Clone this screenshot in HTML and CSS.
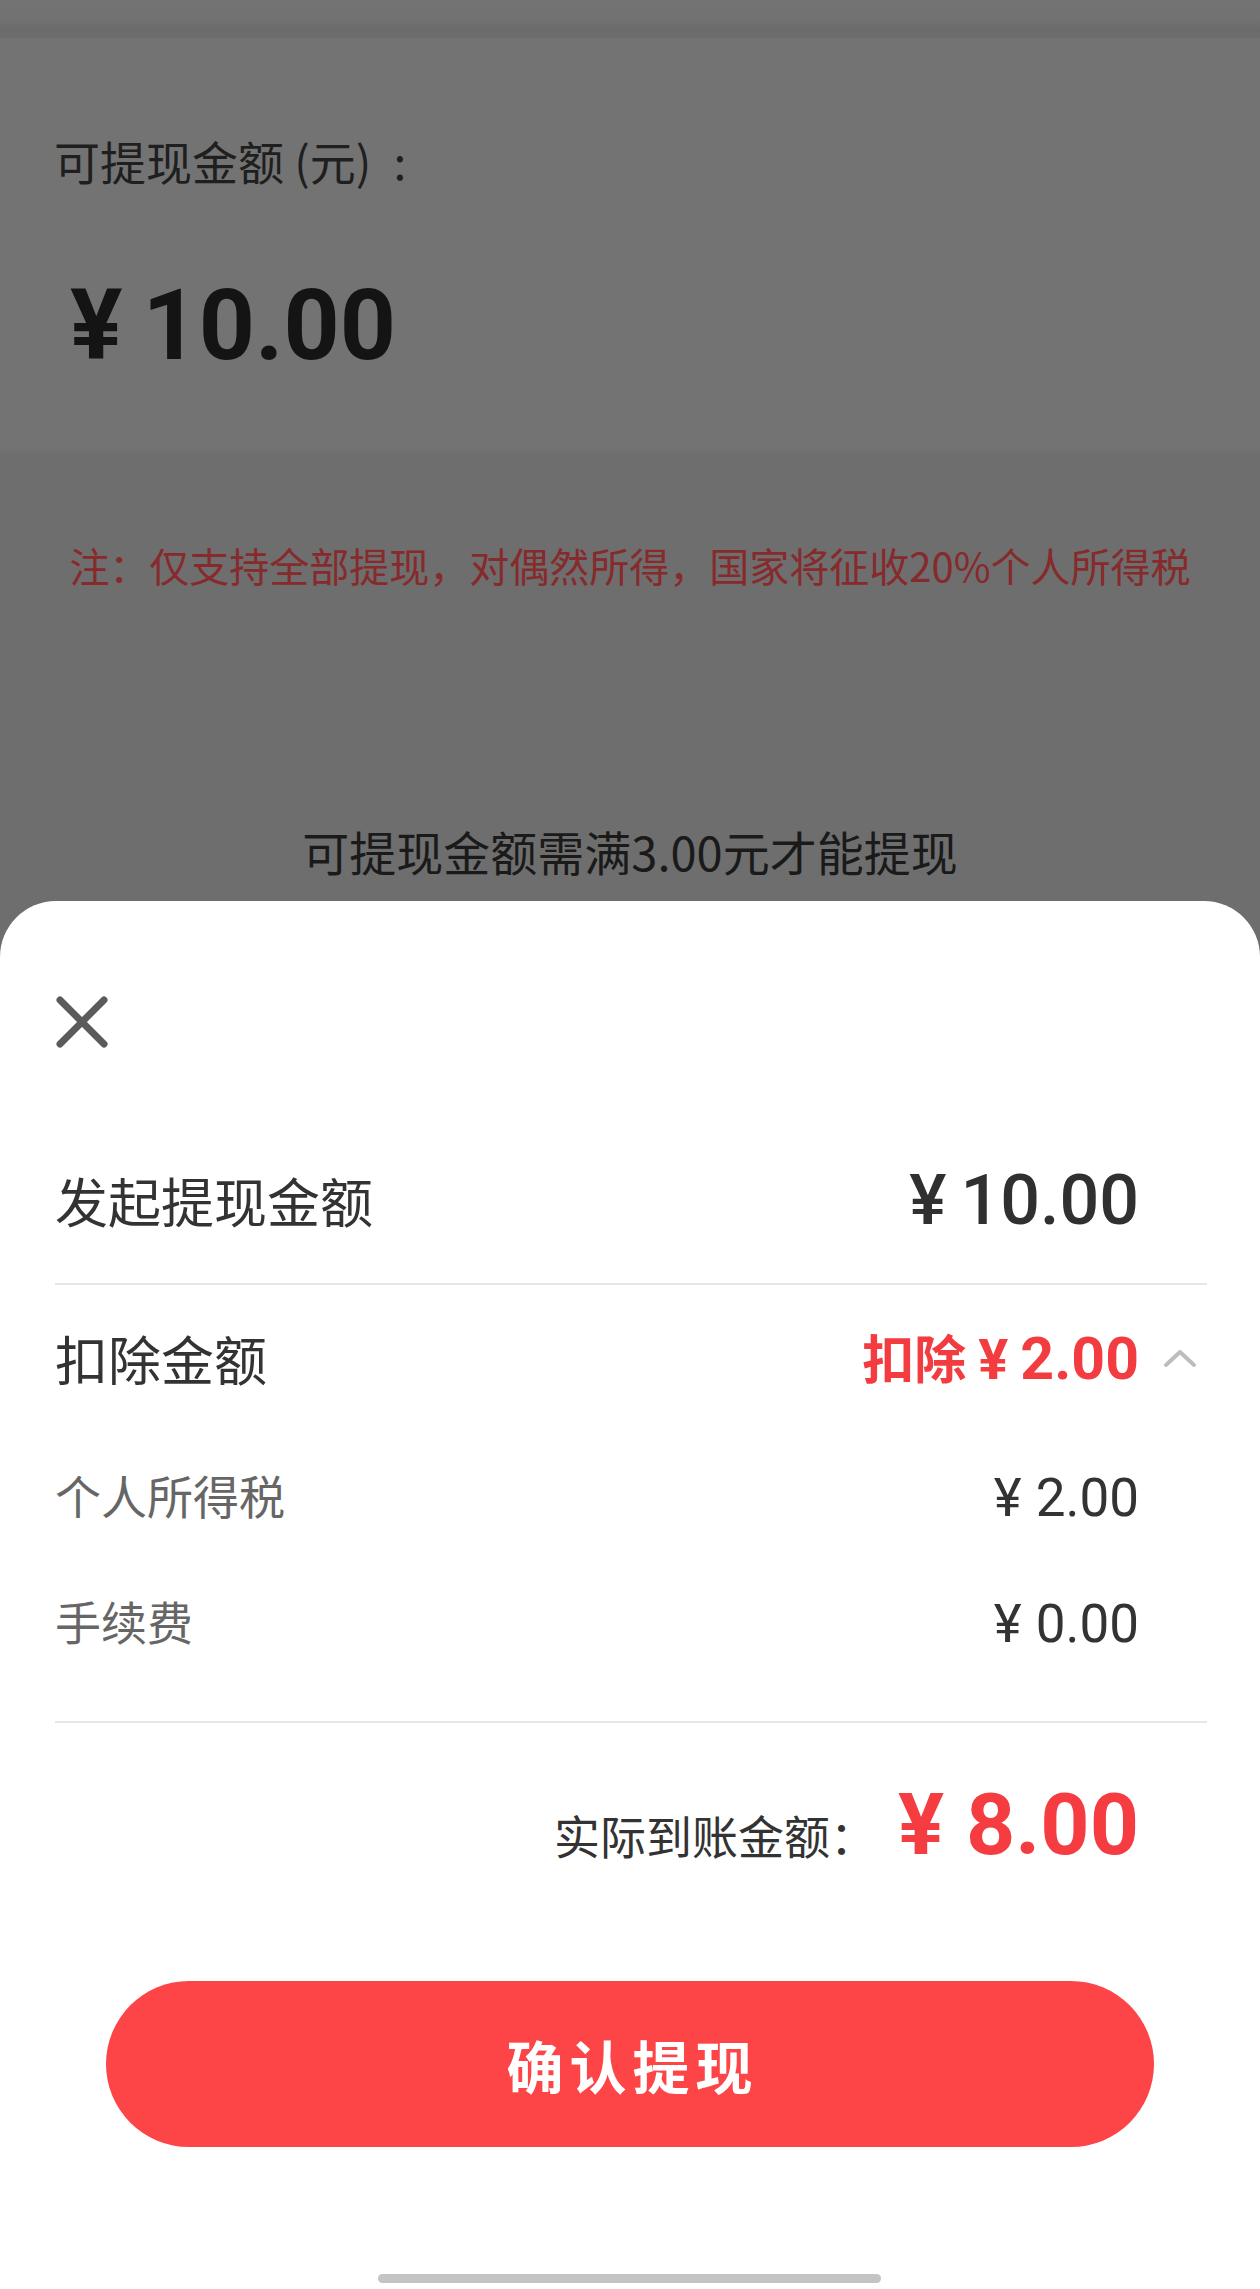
FILE: index.html
```html
<!DOCTYPE html>
<html lang="zh-CN">
<head>
<meta charset="utf-8">
<title>提现</title>
<link rel="stylesheet" href="styles.css">
</head>
<body>
<div class="screen">
  <div class="page">
    <div class="status"></div>
    <div class="balance-card">
      <div class="balance-label">可提现金额 (元)<span class="colon">:</span></div>
      <div class="balance-amount"><span class="yen">¥</span>10.00</div>
    </div>
    <div class="page-lower">
      <div class="notice">注：仅支持全部提现，对偶然所得，国家将征收20%个人所得税</div>
      <div class="min-tip">可提现金额需满3.00元才能提现</div>
    </div>
  </div>

  <div class="sheet">
    <div class="sheet-head">
      <svg class="close" width="52" height="52" viewBox="0 0 52 52" aria-hidden="true">
        <path d="M4 4 L48 48 M48 4 L4 48" stroke="#5b5b5b" stroke-width="7" stroke-linecap="round" fill="none"/>
      </svg>
    </div>

    <div class="row row-main">
      <span class="row-label">发起提现金额</span>
      <span class="row-value val-start"><span class="yen-s">¥</span>10.00</span>
    </div>
    <div class="divider"></div>

    <div class="row row-deduct">
      <span class="row-label">扣除金额</span>
      <span class="deduct-wrap">
        <span class="deduct-value">扣除<span class="yen-d">¥</span><span class="num">2.00</span></span>
        <svg class="chevron" width="34" height="20" viewBox="0 0 34 20" aria-hidden="true">
          <path d="M3 17 L17 4 L31 17" stroke="#bdbdbd" stroke-width="4" stroke-linecap="round" stroke-linejoin="round" fill="none"/>
        </svg>
      </span>
    </div>

    <div class="row row-sub">
      <span class="sub-label">个人所得税</span>
      <span class="sub-value"><span class="yen-sub">¥</span>2.00</span>
    </div>
    <div class="row row-sub">
      <span class="sub-label">手续费</span>
      <span class="sub-value"><span class="yen-sub">¥</span>0.00</span>
    </div>
    <div class="divider divider-2"></div>

    <div class="actual">
      <span class="actual-label">实际到账金额：</span>
      <span class="actual-value"><span class="yen-a">¥</span>8.00</span>
    </div>

    <div class="btn-wrap">
      <button class="confirm">确认提现</button>
    </div>

    <div class="home-bar-wrap"><div class="home-bar"></div></div>
  </div>
</div>
</body>
</html>
```

FILE: styles.css
```css
* { box-sizing: border-box; }
html, body {
  margin: 0;
  padding: 0;
}
body {
  width: 1260px;
  height: 2289px;
  overflow: hidden;
  font-family: "Noto Sans CJK SC", "Noto Sans", sans-serif;
  background: #6e6e6e;
}
.screen {
  width: 1260px;
  height: 2289px;
  display: flex;
  flex-direction: column;
  background: #6e6e6e;
}

/* dimmed page behind the sheet */
.page {
  height: 901px;
  display: flex;
  flex-direction: column;
}
.status {
  height: 38px;
  background: linear-gradient(to bottom, #737373 0, #727272 18px, #6b6b6b 30px, #6d6d6d 38px);
}
.balance-card {
  height: 415px;
  background: #737373;
  padding: 92px 0 0 54px;
  box-shadow: inset 0 -4px 4px -3px rgba(0,0,0,0.06);
}
.balance-label {
  font-size: 46px;
  line-height: 60px;
  color: #1f1f1f;
}
.colon { margin-left: 22px; }
.balance-amount {
  margin-top: 76px;
  margin-left: 16px;
  font-family: Roboto, "Noto Sans", sans-serif;
  font-weight: 700;
  font-size: 98px;
  line-height: 120px;
  color: #141414;
}
.yen { margin-right: 20px; }

.page-lower {
  flex: 1;
  background: #6e6e6e;
  display: flex;
  flex-direction: column;
  align-items: center;
  padding-top: 87px;
}
.notice {
  font-size: 40px;
  line-height: 50px;
  color: #862a2c;
  white-space: nowrap;
}
.min-tip {
  margin-top: 231px;
  font-size: 47px;
  line-height: 60px;
  color: #1a1a1a;
}

/* bottom sheet */
.sheet {
  flex: 1;
  background: #ffffff;
  border-radius: 56px 56px 0 0;
  padding: 0 53px 0 55px;
  display: flex;
  flex-direction: column;
}
.sheet-head {
  height: 146px;
  padding-top: 95px;
}
.close { display: block; margin-left: 1px; }

.row {
  display: flex;
  justify-content: space-between;
  align-items: center;
}
.row-main {
  height: 236px;
  padding-top: 70px;
  padding-right: 68px;
}
.row-label {
  font-size: 53px;
  line-height: 70px;
  color: #333333;
}
.val-start {
  font-family: Roboto, "Noto Sans", sans-serif;
  font-weight: 500;
  font-size: 70px;
  line-height: 80px;
  color: #303030;
}
.yen-s { margin-right: 14px; }

.divider {
  height: 2px;
  background: #e6e6e6;
}

.row-deduct {
  height: 146px;
}
.deduct-wrap {
  display: flex;
  align-items: center;
}
.deduct-value {
  font-family: "Noto Sans CJK SC", sans-serif;
  font-weight: 700;
  font-size: 52px;
  line-height: 70px;
  color: #f23c40;
}
.yen-d {
  font-family: Roboto, sans-serif;
  font-size: 56px;
  margin: 0 12px 0 12px;
}
.deduct-value .num {
  font-family: Roboto, sans-serif;
  font-size: 59px;
}
.chevron {
  display: block;
  margin-left: 24px;
  margin-right: 10px;
}

.row-sub {
  height: 126px;
  padding-right: 68px;
}
.sub-label {
  font-size: 46px;
  line-height: 60px;
  color: #666666;
}
.sub-value {
  font-family: Roboto, "Noto Sans", sans-serif;
  font-size: 53px;
  line-height: 60px;
  color: #333333;
  padding-top: 7px;
}
.yen-sub { margin-right: 14px; }

.divider-2 { margin-top: 38px; }

.actual {
  display: flex;
  justify-content: flex-end;
  align-items: baseline;
  padding-right: 68px;
  padding-top: 52px;
  height: 258px;
}
.actual-label {
  font-size: 46px;
  line-height: 60px;
  color: #333333;
  margin-right: 22px;
}
.actual-value {
  font-family: Roboto, "Noto Sans", sans-serif;
  font-weight: 700;
  font-size: 86px;
  line-height: 100px;
  color: #f43c41;
}
.yen-a { margin-right: 22px; }

.btn-wrap {
  display: flex;
  justify-content: center;
  padding-right: 3px;
}
.confirm {
  width: 1048px;
  height: 166px;
  border: none;
  border-radius: 83px;
  background: #fd4447;
  color: #ffffff;
  font-family: "Noto Sans CJK SC", sans-serif;
  font-weight: 700;
  font-size: 57px;
  letter-spacing: 6px;
  padding: 0 0 0 6px;
}

.home-bar-wrap {
  flex: 1;
  display: flex;
  justify-content: center;
  align-items: flex-end;
  padding-bottom: 6px;
}
.home-bar {
  width: 503px;
  height: 9px;
  border-radius: 5px;
  background: #c4c4c4;
  margin-right: 3px;
}
```
